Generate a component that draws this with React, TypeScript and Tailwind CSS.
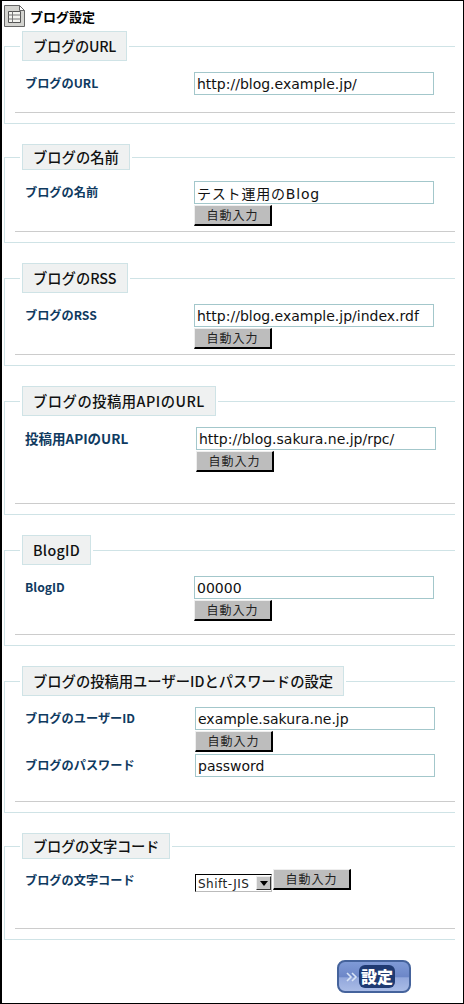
const jp = "font-['Noto_Sans_CJK_JP',sans-serif]";
const fieldText = "font-['DejaVu_Sans','Noto_Sans_CJK_JP',sans-serif] text-[14px] text-[#111]";

const AutoButton = () => (
  <button
    type="button"
    className={`${jp} block h-[21px] w-[78px] border-t border-l border-t-[#eee] border-l-[#eee] border-r-2 border-b-2 border-r-black border-b-black bg-[#bdbdbd] text-[12px] leading-none tracking-[1px] text-[#222]`}
  >
    自動入力
  </button>
);

const TextField = ({ value, className }: { value: string; className: string }) => (
  <input
    readOnly
    value={value}
    className={`${fieldText} ${className} block h-[23px] w-[240px] border border-[#a3c7cb] bg-white px-[2px] outline-none`}
  />
);

const Label = ({ children, size = "text-[12.2px]" }: { children: React.ReactNode; size?: string }) => (
  <span className={`${jp} ${size} absolute left-[20px] mt-[5px] font-bold leading-none text-[#0f3a5f]`}>{children}</span>
);

const Section = ({
  title,
  body,
  legend = "py-[3px]",
  children,
}: {
  title: string;
  body: string;
  legend?: string;
  children: React.ReactNode;
}) => (
  <fieldset className="mr-[8px] ml-[2px] border-t border-l border-b border-[#cfe3e6]">
    <legend className="ml-[15px] px-[2px]">
      <span className={`${jp} ${legend} block border border-[#cfe3e6] bg-[#eff1f1] px-[10px] text-[14.3px] font-medium leading-[22px] text-[#111]`}>
        {title}
      </span>
    </legend>
    <div className={`relative ${body}`}>{children}</div>
    <div className="mb-[10px] ml-[10px] border-t border-[#cccccc]" />
  </fieldset>
);

const Arrow = () => (
  <span className="pointer-events-none absolute top-[2px] right-[1px] flex h-[14px] w-[15px] items-center justify-center border border-t-[#eee] border-l-[#eee] border-r-[#333] border-b-[#333] bg-[#c4c4c4]">
    <svg width="8" height="5" viewBox="0 0 8 5">
      <path d="M0 0h8L4 5z" fill="#000" />
    </svg>
  </span>
);

export default function App() {
  return (
    <div className="h-[1004px] w-[464px] overflow-hidden border-t border-r border-b border-l-2 border-black bg-white">
      <header className="flex h-[30px] items-center gap-[5px] pl-[2px]">
        <svg width="21" height="22" viewBox="0 0 21 22">
          <path d="M.5.5h15l5 5v16H.5z" fill="#d4d4d0" stroke="#666" />
          <path d="M15.5.5v5h5z" fill="#fff" stroke="#666" />
          <path d="M4.5 6.5h12v11h-12z" fill="#f4f4f0" stroke="#555" />
          <path d="M4.5 10h12M4.5 14h12M8.5 6.5v11" fill="none" stroke="#777" />
        </svg>
        <h1 className={`${jp} text-[13px] font-bold leading-none text-black`}>ブログ設定</h1>
      </header>

      <div className="flex flex-col gap-[20px]">
        <Section title="ブログのURL" legend="py-[3px] tracking-[-0.3px]" body="h-[51px] pt-[11px]">
          <Label>ブログのURL</Label>
          <TextField value="http://blog.example.jp/" className="ml-[189px]" />
        </Section>

        <Section title="ブログの名前" legend="py-px" body="h-[61px] pt-[11px]">
          <Label>ブログの名前</Label>
          <TextField value="テスト運用のBlog" className="ml-[189px] tracking-[0.8px]" />
          <div className="mt-px ml-[189px]">
            <AutoButton />
          </div>
        </Section>

        <Section title="ブログのRSS" body="h-[61px] pt-[11px]">
          <Label>ブログのRSS</Label>
          <TextField value="http://blog.example.jp/index.rdf" className="ml-[189px]" />
          <div className="mt-px ml-[189px]">
            <AutoButton />
          </div>
        </Section>

        <Section title="ブログの投稿用APIのURL" legend="py-[3px] tracking-[0.5px]" body="h-[87px] pt-[11px]">
          <Label size="text-[13.5px]">投稿用APIのURL</Label>
          <TextField value="http://blog.sakura.ne.jp/rpc/" className="ml-[191px]" />
          <div className="mt-px ml-[191px]">
            <AutoButton />
          </div>
        </Section>

        <Section title="BlogID" legend="py-[3px] tracking-[0.3px]" body="h-[69px] pt-[11px]">
          <Label>BlogID</Label>
          <TextField value="00000" className="ml-[189px]" />
          <div className="mt-px ml-[189px]">
            <AutoButton />
          </div>
        </Section>

        <Section title="ブログの投稿用ユーザーIDとパスワードの設定" body="h-[105px] pt-[11px]">
          <Label>ブログのユーザーID</Label>
          <TextField value="example.sakura.ne.jp" className="ml-[190px]" />
          <div className="mt-px ml-[190px]">
            <AutoButton />
          </div>
          <div className="relative mt-[2px]">
            <Label>ブログのパスワード</Label>
            <TextField value="password" className="ml-[190px]" />
          </div>
        </Section>

        <Section title="ブログの文字コード" legend="py-px tracking-[-0.3px]" body="h-[69px] pt-[10px]">
          <Label>ブログの文字コード</Label>
          <div className="ml-[190px] flex items-start gap-px">
            <div className="relative mt-[5px]">
              <select className="block h-[18px] w-[77px] appearance-none border border-t-black border-l-black border-r-[#bbb] border-b-[#bbb] bg-white pl-[2px] font-['DejaVu_Sans',sans-serif] text-[12px] tracking-[0.5px] text-[#222] outline-none">
                <option>Shift-JIS</option>
              </select>
              <Arrow />
            </div>
            <AutoButton />
          </div>
        </Section>
      </div>

      <div className="mt-[20px] ml-[335px]">
        <button
          type="button"
          className="flex h-[33px] w-[74px] items-center gap-px rounded-[8px] border-2 border-[#45639c] bg-[linear-gradient(#7f9ad6_0%,#6d87c8_50%,#93a8dc_55%,#a9bbe6_100%)] pl-[7px]"
        >
          <svg width="12" height="10" viewBox="0 0 12 10" fill="none" stroke="#d8e4f6" strokeWidth="1.6">
            <path d="M1 1l4 4-4 4M6 1l4 4-4 4" />
          </svg>
          <span className={`${jp} rounded-[6px] bg-[#1f3a72] px-[2px] text-[16px] font-black leading-[23px] text-white`}>設定</span>
        </button>
      </div>
    </div>
  );
}
